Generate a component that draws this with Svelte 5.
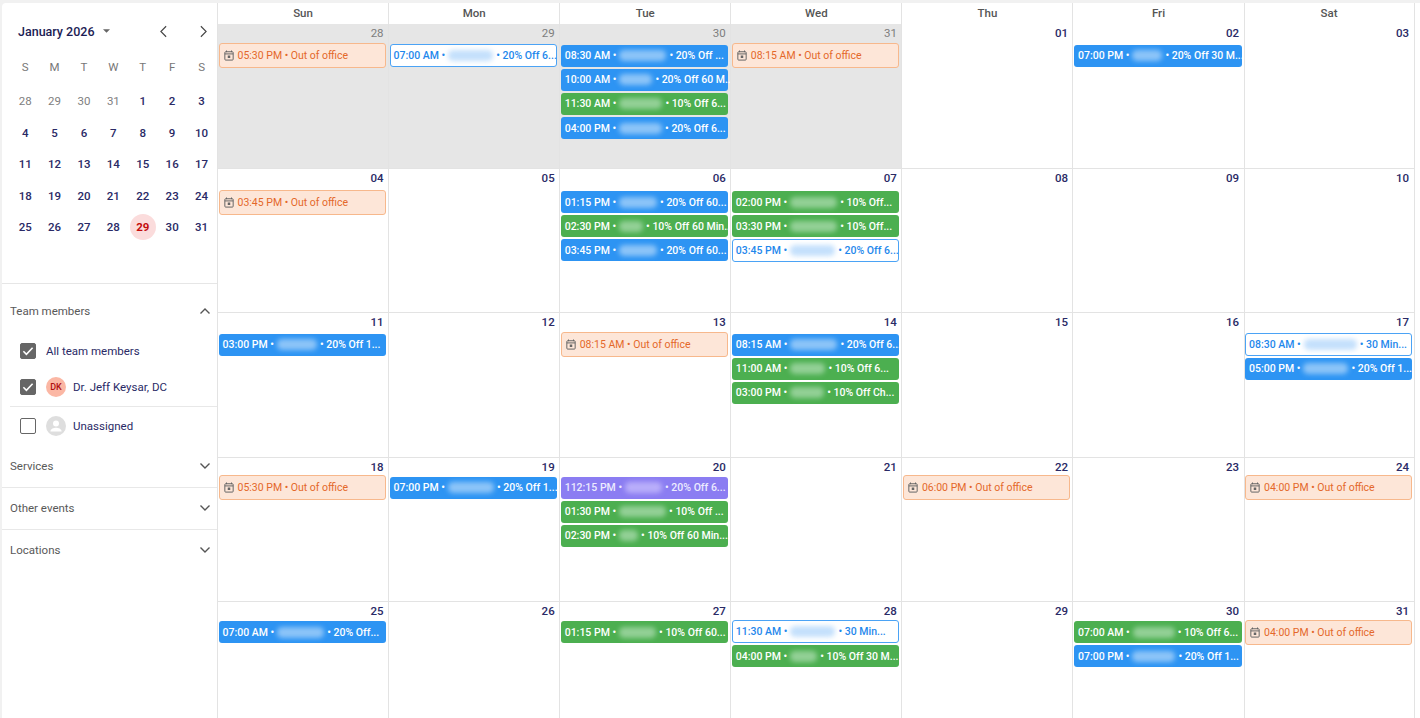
<script>
  const dow = ['S', 'M', 'T', 'W', 'T', 'F', 'S'];
  const headers = ['Sun', 'Mon', 'Tue', 'Wed', 'Thu', 'Fri', 'Sat'];

  const miniDays = [
    28, 29, 30, 31, 1, 2, 3, 4, 5, 6, 7, 8, 9, 10, 11, 12, 13, 14, 15, 16, 17, 18, 19, 20, 21, 22, 23, 24, 25, 26, 27,
    28, 29, 30, 31
  ];

  const ooo = (time) => ({ kind: 'off', time });
  const ev = (kind, time, blur, rest) => ({ kind, time, blur, rest });

  const cells = [
    { day: '28', past: true, events: [ooo('05:30 PM')] },
    { day: '29', past: true, events: [ev('outline', '07:00 AM', 45, '20% Off 6...')] },
    {
      day: '30',
      past: true,
      events: [
        ev('blue', '08:30 AM', 47, '20% Off ...'),
        ev('blue', '10:00 AM', 33, '20% Off 60 M...'),
        ev('green', '11:30 AM', 43, '10% Off 6...'),
        ev('blue', '04:00 PM', 43, '20% Off 6...')
      ]
    },
    { day: '31', past: true, events: [ooo('08:15 AM')] },
    { day: '01', events: [] },
    { day: '02', events: [ev('blue', '07:00 PM', 30, '20% Off 30 M...')] },
    { day: '03', events: [] },

    { day: '04', events: [ooo('03:45 PM')] },
    { day: '05', events: [] },
    {
      day: '06',
      events: [
        ev('blue', '01:15 PM', 38, '20% Off 60...'),
        ev('green', '02:30 PM', 24, '10% Off 60 Min...'),
        ev('blue', '03:45 PM', 38, '20% Off 60...')
      ]
    },
    {
      day: '07',
      events: [
        ev('green', '02:00 PM', 47, '10% Off...'),
        ev('green', '03:30 PM', 47, '10% Off...'),
        ev('outline', '03:45 PM', 45, '20% Off 6...')
      ]
    },
    { day: '08', events: [] },
    { day: '09', events: [] },
    { day: '10', events: [] },

    { day: '11', events: [ev('blue', '03:00 PM', 40, '20% Off 1...')] },
    { day: '12', events: [] },
    { day: '13', events: [ooo('08:15 AM')] },
    {
      day: '14',
      events: [
        ev('blue', '08:15 AM', 47, '20% Off 6...'),
        ev('green', '11:00 AM', 35, '10% Off 6...'),
        ev('green', '03:00 PM', 34, '10% Off Ch...')
      ]
    },
    { day: '15', events: [] },
    { day: '16', events: [] },
    {
      day: '17',
      events: [ev('outline', '08:30 AM', 53, '30 Min...'), ev('blue', '05:00 PM', 45, '20% Off 1...')]
    },

    { day: '18', events: [ooo('05:30 PM')] },
    { day: '19', events: [ev('blue', '07:00 PM', 46, '20% Off 1...')] },
    {
      day: '20',
      events: [
        ev('purple', '112:15 PM', 37, '20% Off 6...'),
        ev('green', '01:30 PM', 47, '10% Off ...'),
        ev('green', '02:30 PM', 19, '10% Off 60 Min...')
      ]
    },
    { day: '21', events: [] },
    { day: '22', events: [ooo('06:00 PM')] },
    { day: '23', events: [] },
    { day: '24', events: [ooo('04:00 PM')] },

    { day: '25', events: [ev('blue', '07:00 AM', 47, '20% Off...')] },
    { day: '26', events: [] },
    { day: '27', events: [ev('green', '01:15 PM', 37, '10% Off 60...')] },
    {
      day: '28',
      events: [ev('outline', '11:30 AM', 45, '30 Min...'), ev('green', '04:00 PM', 27, '10% Off 30 M...')]
    },
    { day: '29', events: [] },
    {
      day: '30',
      events: [ev('green', '07:00 AM', 42, '10% Off 6...'), ev('blue', '07:00 PM', 43, '20% Off 1...')]
    },
    { day: '31', events: [ooo('04:00 PM')] }
  ];
</script>

{#snippet chevron(up)}
  <svg class="chev" viewBox="0 0 12 8" width="12" height="8">
    <path d={up ? 'M1.5 6.5 6 2l4.5 4.5' : 'M1.5 1.5 6 6l4.5-4.5'} />
  </svg>
{/snippet}

{#snippet checkbox(on)}
  <span class="box" class:on>
    {#if on}
      <svg viewBox="0 0 16 16" width="16" height="16"><path d="M3.4 8.3l3 3 6.2-6.6" /></svg>
    {/if}
  </span>
{/snippet}

<div class="page">
  <aside class="side">
    <div class="mini">
      <div class="mini-head">
        <span class="month">January 2026</span>
        <svg class="caret" viewBox="0 0 8 4" width="7" height="4"><path d="M0 0h8L4 4z" /></svg>
        <svg class="nav" viewBox="0 0 8 14" width="7" height="13"><path d="M7 1 1 7l6 6" /></svg>
        <svg class="nav" viewBox="0 0 8 14" width="7" height="13"><path d="M1 1l6 6-6 6" /></svg>
      </div>
      <div class="mini-grid">
        {#each dow as d}
          <span class="dow">{d}</span>
        {/each}
        {#each miniDays as d, i}
          <span class="mday" class:dim={i < 4} class:today={i === 32}>{d}</span>
        {/each}
      </div>
    </div>

    <section class="team">
      <div class="acc-head">
        <span>Team members</span>
        {@render chevron(true)}
      </div>
      <div class="member first">
        {@render checkbox(true)}
        <span class="name all">All team members</span>
      </div>
      <div class="member second">
        {@render checkbox(true)}
        <span class="avatar dk">DK</span>
        <span class="name">Dr. Jeff Keysar, DC</span>
      </div>
      <div class="member third">
        {@render checkbox(false)}
        <span class="avatar none">
          <svg viewBox="0 0 20 20" width="20" height="20">
            <circle cx="10" cy="7.6" r="3" />
            <path d="M4.4 15.4c0-2.6 3.4-3.7 5.6-3.7s5.600 1.100 5.600 3.700z" />
          </svg>
        </span>
        <span class="name">Unassigned</span>
      </div>
    </section>
    <div class="acc-head">
      <span>Services</span>
      {@render chevron(false)}
    </div>
    <div class="acc-head ruled">
      <span>Other events</span>
      {@render chevron(false)}
    </div>
    <div class="acc-head ruled">
      <span>Locations</span>
      {@render chevron(false)}
    </div>
  </aside>

  <main class="cal">
    {#each headers as h}
      <div class="head">{h}</div>
    {/each}
    {#each cells as cell, i}
      <div class="cell" class:past={cell.past} class:second-week={i >= 7 && i < 14} class:late={i >= 21}>
        <div class="num">{cell.day}</div>
        {#each cell.events as e}
          {#if e.kind === 'off'}
            <div class="event off">
              <svg class="cal-ico" viewBox="0 0 12 13" width="10" height="11">
                <path d="M3 .5v2M9 .5v2" />
                <rect x="1" y="2" width="10" height="10" rx="1" />
                <path d="M1 4.600h10" />
                <rect class="dot" x="4.500" y="6.500" width="3" height="3" />
              </svg>
              <span>{e.time} • Out of office</span>
            </div>
          {:else}
            <div class="event {e.kind}">
              <span>{e.time} •</span>
              <span class="blur" style="width: {e.blur}px"></span>
              <span>• {e.rest}</span>
            </div>
          {/if}
        {/each}
      </div>
    {/each}
  </main>
</div>

<style>
  :global(body) {
    background: #fff;
    font-family: Roboto, 'Liberation Sans', sans-serif;
  }
  .page {
    display: flex;
    height: 718px;
    box-sizing: border-box;
    padding-top: 3px;
    background: #f1f1f1;
    overflow: hidden;
  }
  .side {
    width: 215px;
    margin-left: 2px;
    flex: none;
    background: #fff;
    border-radius: 4px 0 0 0;
    color: #23235f;
  }
  .mini {
    height: 281px;
    box-sizing: border-box;
    border-bottom: 1.500px solid #e6e6e6;
    padding: 18px 0 0 8px;
  }
  .mini-head {
    display: flex;
    align-items: center;
    height: 20px;
    padding-left: 8px;
  }
  .month {
    font-size: 12.500px;
    font-weight: 500;
    color: #1c1c54;
    width: 85px;
    flex: none;
    white-space: nowrap;
  }
  .caret {
    fill: #666;
    margin-right: 50px;
    flex: none;
  }
  .nav {
    fill: none;
    stroke: #444;
    stroke-width: 1.300;
    margin-right: 33px;
    flex: none;
  }
  .mini-grid {
    display: grid;
    grid-template-columns: repeat(7, 29.400px);
    grid-auto-rows: 31.500px;
    margin: 13px 0 0 0.500px;
    justify-items: center;
    align-items: center;
    font-size: 11.500px;
  }
  .dow {
    color: #777;
    transform: translateY(-3px);
  }
  .mday {
    width: 26px;
    height: 26px;
    line-height: 26px;
    text-align: center;
    border-radius: 50%;
    font-weight: 500;
    color: #2a2a66;
  }
  .mday.dim {
    color: #808080;
    font-weight: 400;
  }
  .mday.today {
    background: #fbdcdc;
    color: #c40d0d;
    font-weight: 700;
  }

  .team {
    padding-left: 8px;
  }
  .acc-head {
    display: flex;
    align-items: center;
    justify-content: space-between;
    height: 42px;
    box-sizing: border-box;
    padding: 0 6px 0 8px;
    font-size: 11.500px;
    color: #595959;
  }
  .team .acc-head {
    height: 54px;
    padding-left: 0;
  }
  .chev {
    fill: none;
    stroke: #555;
    stroke-width: 1.400;
  }
  .ruled {
    border-top: 1.500px solid #e8e8e8;
    padding-bottom: 1.500px;
  }
  .member {
    display: flex;
    align-items: center;
    padding-left: 10px;
    font-size: 11.500px;
    box-sizing: border-box;
  }
  .member.first {
    height: 26px;
  }
  .member.second {
    height: 43px;
    padding-top: 4px;
    border-bottom: 1px solid #e8e8e8;
  }
  .member.third {
    height: 38px;
  }
  .box {
    width: 16px;
    height: 16px;
    box-sizing: border-box;
    border: 1.500px solid #666;
    border-radius: 2px;
    flex: none;
    display: flex;
    align-items: center;
    justify-content: center;
  }
  .box.on {
    background: #666;
  }
  .box svg {
    fill: none;
    stroke: #fff;
    stroke-width: 1.600;
    flex: none;
  }
  .name {
    margin-left: 7px;
    color: #2a2a66;
  }
  .name.all {
    margin-left: 10px;
  }
  .avatar {
    margin-left: 10px;
    width: 20px;
    height: 20px;
    border-radius: 50%;
    flex: none;
    display: flex;
    align-items: center;
    justify-content: center;
  }
  .avatar.dk {
    background: #fbb7a4;
    color: #b01010;
    font-size: 9px;
    font-weight: 500;
  }
  .avatar.none {
    background: #dedede;
  }
  .avatar.none svg {
    fill: #fff;
  }

  .cal {
    flex: none;
    display: grid;
    grid-template-columns: repeat(7, 171.100px);
    grid-template-rows: 21px repeat(5, 144.500px);
    background: #fff;
    width: 1203px;
  }
  .head {
    border-left: 1.500px solid #e3e3e3;
    display: flex;
    align-items: center;
    justify-content: center;
    font-size: 11.500px;
    font-weight: 500;
    color: #555;
    padding-bottom: 1px;
    box-sizing: border-box;
  }
  .head:nth-child(7) {
    border-right: 1.500px solid #e3e3e3;
  }
  .cell {
    border-left: 1.500px solid #e3e3e3;
    border-bottom: 1.500px solid #e3e3e3;
    box-sizing: border-box;
    padding: 0 2px 0 0.500px;
    min-width: 0;
  }
  .cell:nth-child(7n) {
    border-right: 1.500px solid #e3e3e3;
  }
  .cell.past {
    background: #e6e6e6;
  }
  .num {
    height: 19px;
    line-height: 19px;
    text-align: right;
    padding-right: 2.500px;
    font-size: 11.500px;
    font-weight: 500;
    color: #2a2a66;
  }
  .second-week .num {
    height: 21px;
  }
  .late .num {
    height: 17.500px;
  }
  .past .num {
    color: #7d7d7d;
    font-weight: 400;
  }
  .event {
    display: flex;
    align-items: center;
    gap: 3px;
    height: 22px;
    box-sizing: border-box;
    border-radius: 3px;
    margin: 1.500px 0 2.200px;
    padding-left: 4px;
    font-size: 10.500px;
    font-weight: 500;
    color: #fff;
    white-space: nowrap;
  }
  .blue {
    background: #2d94f3;
  }
  .green {
    background: #4caf50;
  }
  .purple {
    background: #8b7df2;
    color: #ecebff;
  }
  .outline {
    height: 23px;
    background: #fff;
    border: 1.200px solid #4ba3f5;
    color: #1f88ec;
    padding-left: 3px;
    margin-top: 0.500px;
  }
  .off {
    height: 25px;
    background: #fde6d8;
    border: 1px solid #f7b88c;
    color: #e4682a;
    font-weight: 400;
    gap: 4px;
    margin-top: 0;
    padding-left: 4px;
  }
  .cal-ico {
    fill: none;
    stroke: #666;
    stroke-width: 1.200;
    flex: none;
  }
  .cal-ico .dot {
    fill: #666;
    stroke: none;
  }
  .blur {
    flex: none;
    height: 11px;
    border-radius: 5px;
    filter: blur(2.500px);
    background: #8cc4f8;
  }
  .green .blur {
    background: #93d096;
  }
  .purple .blur {
    background: #b9aefa;
  }
  .outline .blur {
    background: #c4e0fc;
  }
</style>
